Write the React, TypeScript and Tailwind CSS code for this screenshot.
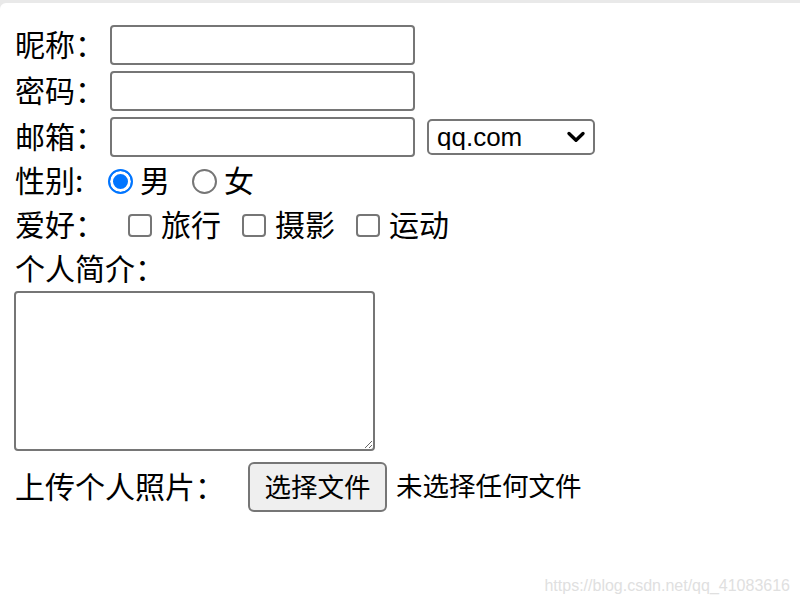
import { useState } from "react";

const cjk = { fontFamily: '"Noto Sans CJK SC", "Noto Sans", sans-serif' };

const hobbies = ["旅行", "摄影", "运动"];

export default function App() {
  const [gender, setGender] = useState("男");
  const [picked, setPicked] = useState<string[]>([]);
  const [domain, setDomain] = useState("qq.com");

  const toggle = (h: string) =>
    setPicked((prev) => (prev.includes(h) ? prev.filter((x) => x !== h) : [...prev, h]));

  return (
    <div className="relative h-[606px] w-[800px] overflow-hidden bg-[#e9e9e9] pt-[3px]" style={cjk}>
      <div className="h-full rounded-tl-[6px] bg-white pl-[15px] pt-[19px] text-black">
        {/* 昵称 */}
        <div className="flex h-[46px] items-center">
          <span className="w-[95px] pb-[4px] text-[30px] leading-none">昵称：</span>
          <input className="h-[40px] w-[305px] rounded-[4px] border-2 border-[#767676] px-2 text-[25px] outline-none" />
        </div>
        {/* 密码 */}
        <div className="flex h-[46px] items-center">
          <span className="w-[95px] pb-[4px] text-[30px] leading-none">密码：</span>
          <input type="password" className="h-[40px] w-[305px] rounded-[4px] border-2 border-[#767676] px-2 text-[25px] outline-none" />
        </div>
        {/* 邮箱 */}
        <div className="flex h-[46px] items-center">
          <span className="w-[95px] pb-[4px] text-[30px] leading-none">邮箱：</span>
          <input className="h-[40px] w-[305px] rounded-[4px] border-2 border-[#767676] px-2 text-[25px] outline-none" />
          <div className="relative ml-[12px]">
            <select
              value={domain}
              onChange={(e) => setDomain(e.target.value)}
              className="h-[36px] w-[168px] appearance-none rounded-[5px] border-2 border-[#767676] pl-[8px] text-[26px] leading-none outline-none"
              style={{ fontFamily: '"Liberation Sans", Arial, sans-serif' }}
            >
              <option>qq.com</option>
              <option>163.com</option>
              <option>gmail.com</option>
            </select>
            <svg
              className="pointer-events-none absolute right-[9px] top-[12px]"
              width="20"
              height="12"
              viewBox="0 0 20 12"
              fill="none"
              stroke="black"
              strokeWidth="3.4"
              strokeLinecap="round"
              strokeLinejoin="round"
            >
              <path d="M3 2.5 L10 9.2 L17 2.5" />
            </svg>
          </div>
        </div>
        {/* 性别 */}
        <div className="flex h-[42px] items-center">
          <span className="w-[93px] pb-[4px] text-[30px] leading-none">性别:</span>
          {["男", "女"].map((g, i) => (
            <label key={g} className={`flex items-center ${i > 0 ? "ml-[22px]" : ""}`}>
              <input
                type="radio"
                name="gender"
                checked={gender === g}
                onChange={() => setGender(g)}
                className="h-[25px] w-[25px] appearance-none rounded-full border-2 border-[#767676] bg-white checked:border-[#0075ff] checked:bg-[#0075ff] checked:shadow-[inset_0_0_0_3px_white]"
              />
              <span className="ml-[7px] pb-[4px] text-[30px] leading-none">{g}</span>
            </label>
          ))}
        </div>
        {/* 爱好 */}
        <div className="flex h-[46px] items-center">
          <span className="w-[113px] pb-[4px] text-[30px] leading-none">爱好：</span>
          {hobbies.map((h, i) => (
            <label key={h} className={`flex items-center ${i > 0 ? "ml-[21px]" : ""}`}>
              <input
                type="checkbox"
                checked={picked.includes(h)}
                onChange={() => toggle(h)}
                className="h-[23px] w-[24px] appearance-none rounded-[4px] border-2 border-[#767676] bg-white checked:border-[#0075ff] checked:bg-[#0075ff]"
              />
              <span className="ml-[9px] pb-[4px] text-[30px] leading-none">{h}</span>
            </label>
          ))}
        </div>
        {/* 个人简介 */}
        <div className="flex h-[42px] items-center">
          <span className="pb-[4px] text-[30px] leading-none">个人简介：</span>
        </div>
        <textarea className="-ml-px mt-[1px] block h-[160px] w-[361px] rounded-[4px] border-2 border-[#767676] p-1 text-[25px] outline-none" />
        {/* 上传个人照片 */}
        <div className="mt-[11px] flex items-center">
          <span className="w-[233px] pb-[4px] text-[30px] leading-none">上传个人照片：</span>
          <button className="h-[50px] w-[139px] rounded-[6px] border-2 border-[#767676] bg-[#efefef] pb-[2px] text-[26.5px] leading-none">
            选择文件
          </button>
          <span className="ml-[9px] pb-[3px] text-[26.5px] leading-none">未选择任何文件</span>
        </div>
      </div>
      <div
        className="absolute bottom-[12px] right-[10px] text-[16px] leading-none text-[#e0e0e0]"
        style={{ fontFamily: '"Liberation Sans", Arial, sans-serif' }}
      >
        https://blog.csdn.net/qq_41083616
      </div>
    </div>
  );
}
